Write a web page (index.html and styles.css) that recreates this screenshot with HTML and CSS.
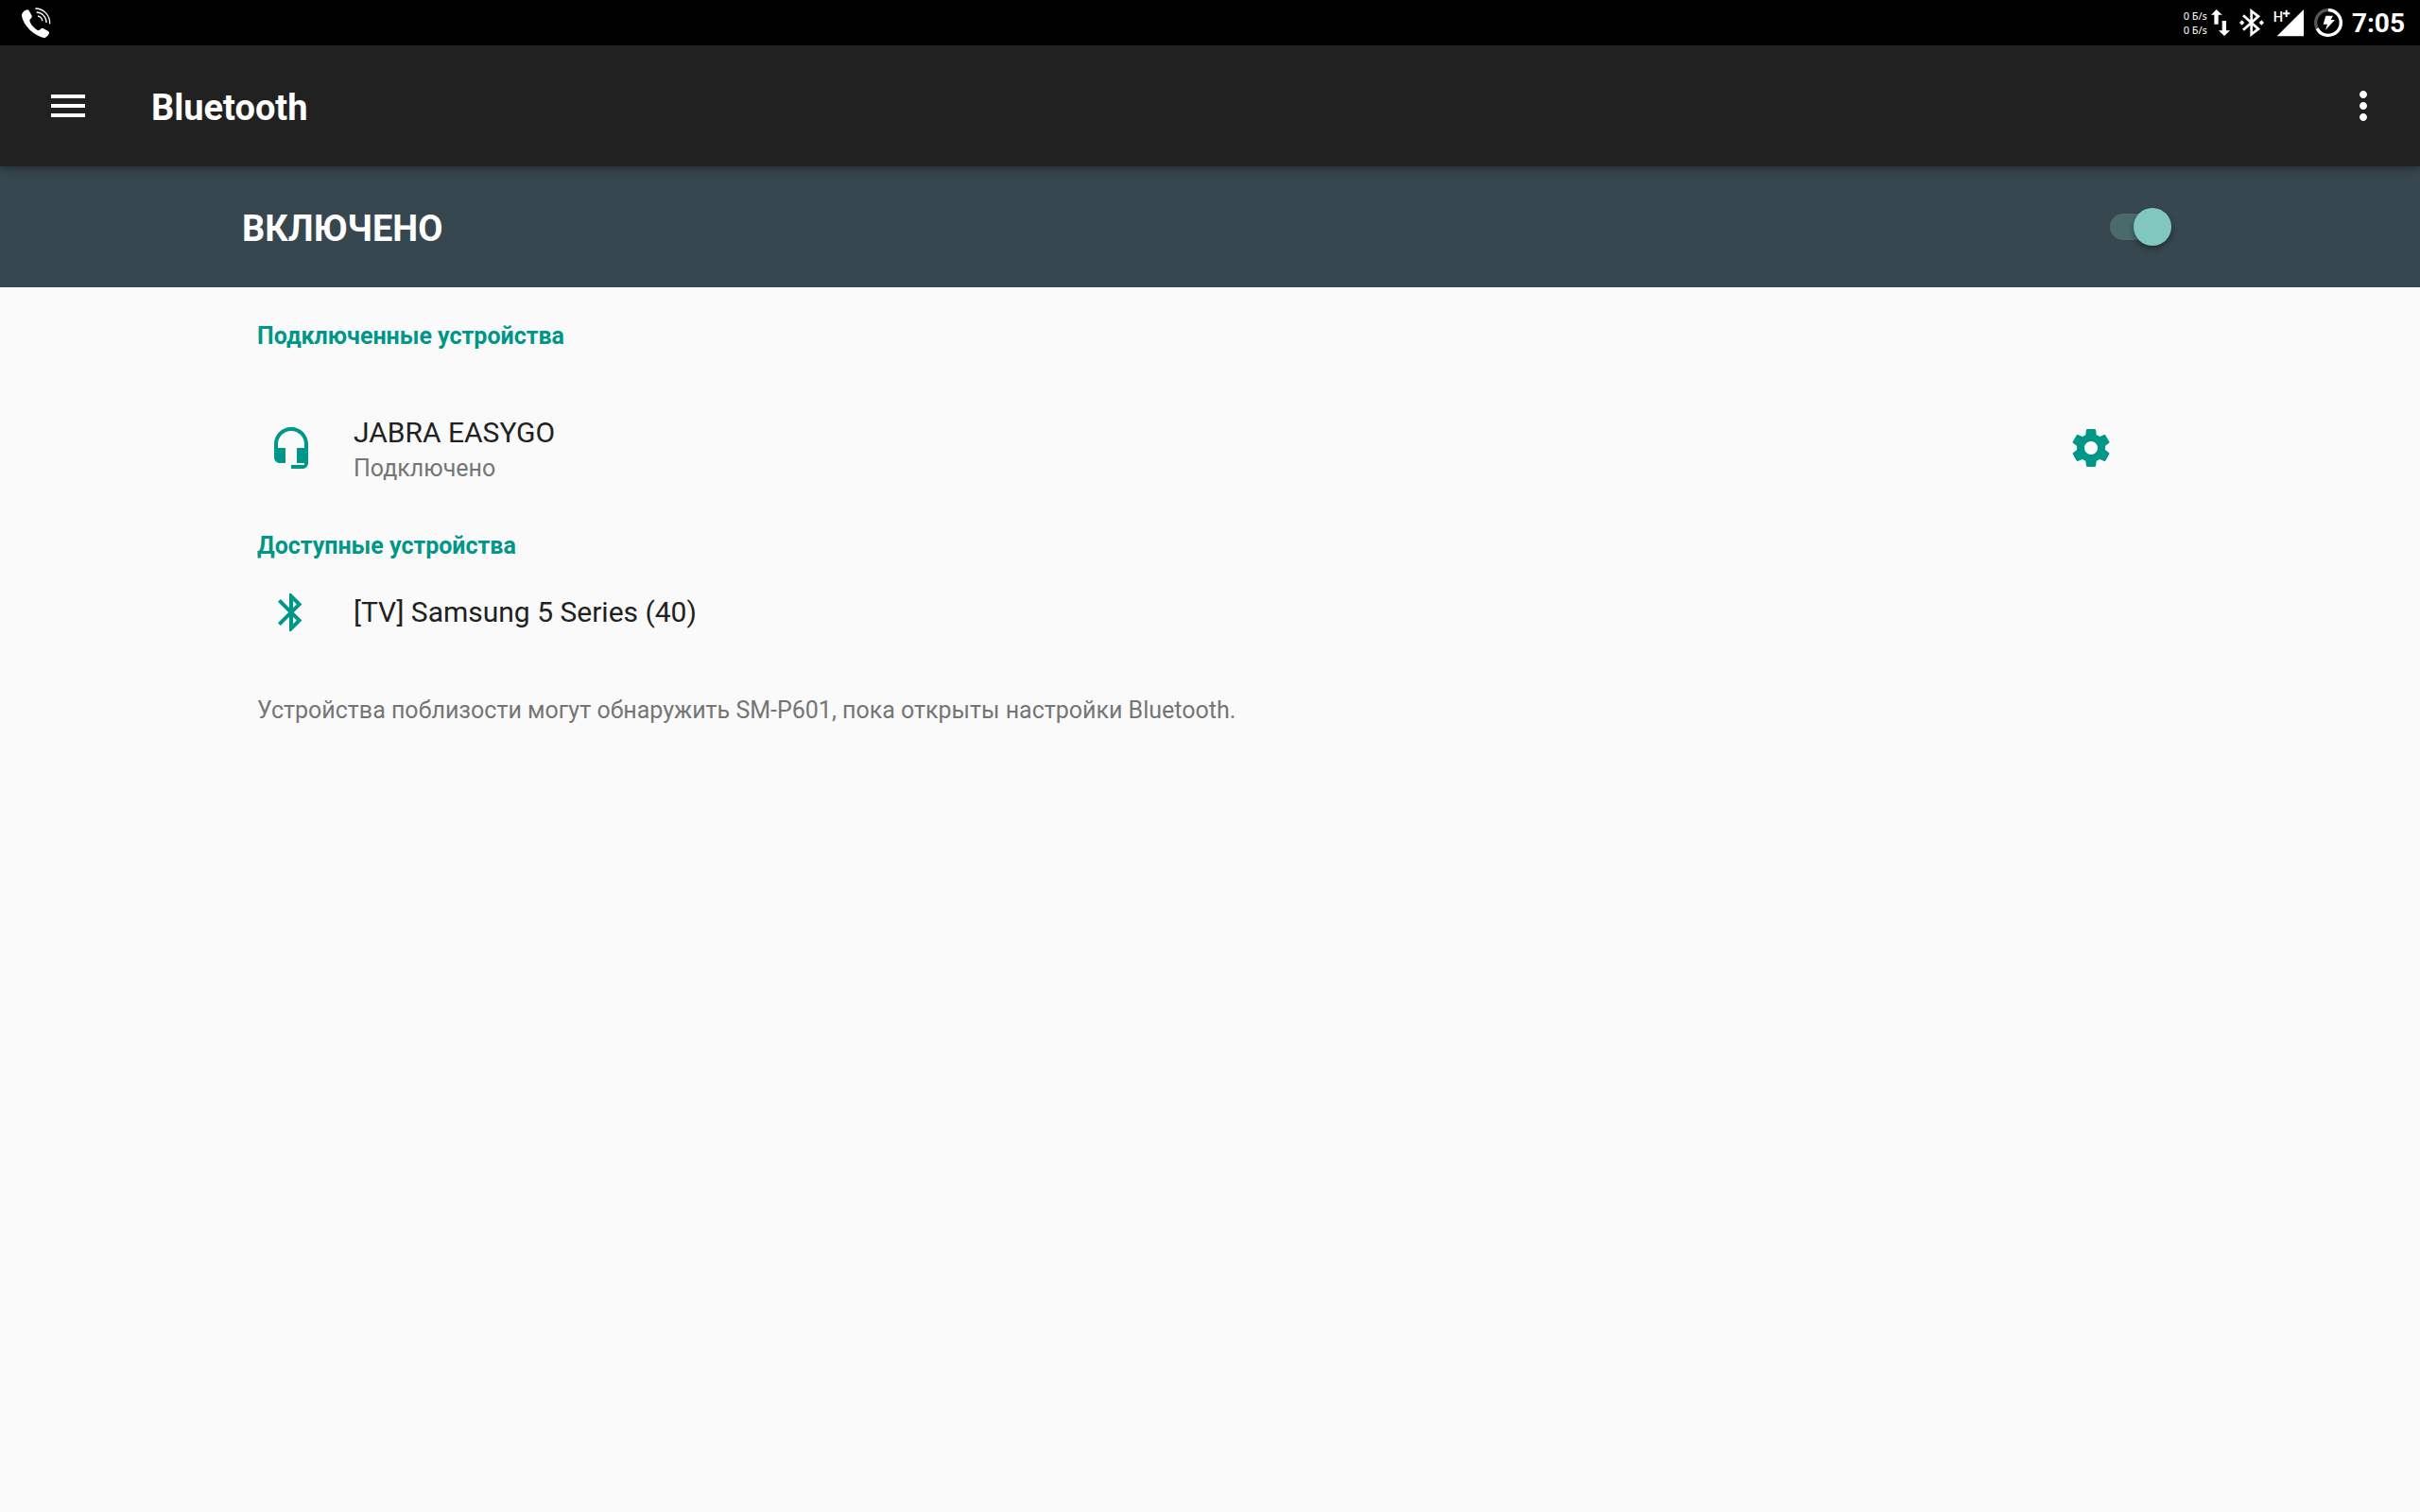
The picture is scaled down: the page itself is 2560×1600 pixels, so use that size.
FILE: index.html
```html
<!DOCTYPE html>
<html lang="ru">
<head>
  <meta charset="UTF-8">
  <meta name="viewport" content="width=device-width, initial-scale=1.0">
  <title>Bluetooth</title>
  <link rel="stylesheet" href="styles.css">
</head>
<body>

  <div class="status-bar">
    <svg class="call" viewBox="60 20 102 102" aria-hidden="true">
      <path fill="#fff" d="M70 42Q76 32 86 30Q90 29 93 34L101 49Q103 53 99 57L94 62Q93 68 100 78Q110 90 120 96L126 94Q130 88 135 88L152 97Q158 101 156 105Q152 115 144 118Q136 121 118 111Q92 96 78 73Q66 52 70 42Z"/>
      <path fill="none" stroke="#fff" stroke-width="4" d="M112 26A46 46 0 0 1 158 75M116 38A32 32 0 0 1 147 71M120 50A16 16 0 0 1 134 66"/>
    </svg>

    <div class="status-icons">
      <div class="traffic">
        <div class="speed"><span>0 Б/s</span><span>0 Б/s</span></div>
        <svg width="21" height="30" viewBox="145 27 63 90" aria-hidden="true">
          <path fill="#fff" d="M165 30L183 47H171V77H158V47H148ZM183 66H196V97H208L190 114L172 97H183Z"/>
        </svg>
      </div>
      <svg width="26" height="30" viewBox="237 27 78 90" aria-hidden="true">
        <path fill="none" stroke="#fff" stroke-width="8" d="M249 49L297 92L275 109V35L297 52L249 95"/>
        <path fill="#fff" d="M245 64L253 72L245 80L237 72ZM307 64L315 72L307 80L299 72Z"/>
      </svg>
      <svg class="signal" width="33" height="30" viewBox="345 27 99 90">
        <path fill="#fff" d="M356 115L441 30V115Z"/>
        <text x="344" y="68">H</text>
        <path fill="none" stroke="#fff" stroke-width="6" d="M375 43H397M386 32V54"/>
      </svg>
      <svg width="30" height="30" viewBox="477 27 90 90" aria-hidden="true">
        <circle cx="522" cy="72" r="40" fill="none" stroke="#555" stroke-width="10"/>
        <circle cx="522" cy="72" r="40" fill="none" stroke="#fff" stroke-width="10" pathLength="100" stroke-dasharray="67 33" transform="rotate(-90 522 72)"/>
        <path fill="#fff" d="M514 50H537L530 63H543L513 95L519 77H506Z"/>
      </svg>
      <time class="clock">7:05</time>
    </div>
  </div>

  <header class="toolbar">
    <button class="icon-btn" aria-label="Меню">
      <svg class="icon" viewBox="0 0 24 24"><path d="M3 18h18v-2H3v2zm0-5h18v-2H3v2zm0-7v2h18V6H3z"/></svg>
    </button>
    <h1>Bluetooth</h1>
    <button class="icon-btn" aria-label="Ещё">
      <svg class="icon" viewBox="0 0 24 24"><path d="M12 8c1.1 0 2-.9 2-2s-.9-2-2-2-2 .9-2 2 .9 2 2 2zm0 2c-1.1 0-2 .9-2 2s.9 2 2 2 2-.9 2-2-.9-2-2-2zm0 6c-1.1 0-2 .9-2 2s.9 2 2 2 2-.9 2-2-.9-2-2-2z"/></svg>
    </button>
  </header>

  <div class="switch-bar">
    <label for="bt-switch">ВКЛЮЧЕНО</label>
    <input type="checkbox" id="bt-switch" class="switch" checked>
  </div>

  <main>
    <h2>Подключенные устройства</h2>
    <div class="device connected">
      <svg class="icon" viewBox="0 0 24 24"><path d="M12 1c-4.97 0-9 4.03-9 9v7c0 1.66 1.34 3 3 3h3v-8H5v-2c0-3.87 3.13-7 7-7s7 3.13 7 7v2h-4v8h4v1h-7v2h6c1.66 0 3-1.34 3-3V10c0-4.97-4.03-9-9-9z"/></svg>
      <div class="info">
        <div class="name">JABRA EASYGO</div>
        <div class="state">Подключено</div>
      </div>
      <button class="icon-btn settings" aria-label="Настройки устройства">
        <svg class="icon" viewBox="0 0 24 24"><path d="M19.43 12.98c.04-.32.07-.64.07-.98s-.03-.66-.07-.98l2.11-1.65c.19-.15.24-.42.12-.64l-2-3.46c-.12-.22-.39-.3-.61-.22l-2.49 1c-.52-.4-1.08-.73-1.69-.98l-.38-2.65C14.46 2.18 14.25 2 14 2h-4c-.25 0-.46.18-.49.42l-.38 2.65c-.61.25-1.17.59-1.69.98l-2.49-1c-.23-.09-.49 0-.61.22l-2 3.46c-.13.22-.07.49.12.64l2.11 1.65c-.04.32-.07.65-.07.98s.03.66.07.98l-2.11 1.65c-.19.15-.24.42-.12.64l2 3.46c.12.22.39.3.61.22l2.49-1c.52.4 1.08.73 1.69.98l.38 2.65c.03.24.24.42.49.42h4c.25 0 .46-.18.49-.42l.38-2.65c.61-.25 1.17-.59 1.69-.98l2.49 1c.23.09.49 0 .61-.22l2-3.46c.12-.22.07-.49-.12-.64l-2.11-1.65zM12 15.5c-1.93 0-3.5-1.57-3.5-3.5s1.57-3.5 3.5-3.5 3.5 1.57 3.5 3.5-1.57 3.5-3.5 3.5z"/></svg>
      </button>
    </div>

    <h2>Доступные устройства</h2>
    <div class="device">
      <svg class="icon" viewBox="0 0 24 24"><path d="M17.71 7.71L12 2h-1v7.59L6.41 5 5 6.41 10.59 12 5 17.59 6.41 19 11 14.41V22h1l5.71-5.71-4.3-4.29 4.3-4.29zM13 5.83l1.88 1.88L13 9.59V5.83zm1.88 10.46L13 18.17v-3.76l1.88 1.88z"/></svg>
      <div class="info">
        <div class="name">[TV] Samsung 5 Series (40)</div>
      </div>
    </div>

    <p class="hint">Устройства поблизости могут обнаружить SM-P601, пока открыты настройки Bluetooth.</p>
  </main>

</body>
</html>
```
FILE: styles.css
```css
* {
  box-sizing: border-box;
}
body {
  margin: 0;
  min-height: 100vh;
  background-color: #fafafa;
  color: #212121;
  font-family: Roboto, "Noto Sans", sans-serif;
  font-size: 25px;
}
h1, h2, p {
  margin: 0;
}
.icon {
  display: block;
  width: 48px;
  height: 48px;
  fill: currentColor;
  flex-shrink: 0;
}
.icon-btn {
  padding: 0;
  border: none;
  background: none;
  color: inherit;
  cursor: pointer;
}

/* status bar */
.status-bar {
  display: flex;
  align-items: center;
  justify-content: space-between;
  height: 48px;
  padding: 0 16px 0 20px;
  background-color: #000;
  color: #fff;
}
.call {
  width: 34px;
  height: 34px;
}
.status-icons {
  display: flex;
  align-items: center;
  gap: 10px;
}
.traffic {
  display: flex;
  align-items: center;
  gap: 3px;
}
.speed {
  display: flex;
  flex-direction: column;
  font-family: "Noto Sans", sans-serif;
  font-size: 11px;
  line-height: 15px;
}
.signal text {
  fill: #fff;
  font-size: 44px;
  font-weight: 500;
}
.clock {
  font-size: 28px;
  font-weight: 700;
}

/* toolbar */
.toolbar {
  position: relative;
  display: flex;
  align-items: center;
  height: 128px;
  padding: 0 36px 0 48px;
  background-color: #212121;
  color: #fff;
  box-shadow: 0 2px 10px rgba(0, 0, 0, 0.4);
}
.toolbar h1 {
  flex: 1;
  padding: 4px 0 0 64px;
  font-size: 38px;
  font-weight: 700;
}

/* on/off bar */
.switch-bar {
  display: flex;
  align-items: center;
  justify-content: space-between;
  height: 128px;
  padding: 0 10%;
  background-color: #37474f;
  color: #fff;
  font-size: 38px;
  font-weight: 700;
}
.switch-bar label {
  padding-top: 4px;
}
.switch {
  appearance: none;
  display: flex;
  align-items: center;
  justify-content: flex-end;
  width: 60px;
  height: 28px;
  margin: 0 12px 0 0;
  border-radius: 14px;
  background-color: #4b6a6c;
  cursor: pointer;
}
.switch::before {
  content: "";
  flex-shrink: 0;
  width: 40px;
  height: 40px;
  margin: 0 -5px;
  border-radius: 50%;
  background-color: #80c7c0;
  box-shadow: 0 3px 6px rgba(0, 0, 0, 0.4);
}
.switch:not(:checked) {
  justify-content: flex-start;
}

/* device list */
main {
  padding: 32px 10%;
}
h2 {
  padding-left: 16px;
  color: #009688;
  font-size: 25px;
  font-weight: 700;
  line-height: 40px;
}
.device {
  display: flex;
  align-items: center;
  height: 80px;
  padding: 0 68px 0 28px;
  margin: 10px 0 44px;
}
.device.connected {
  margin-top: 58px;
}
.device .icon {
  color: #009688;
}
.info {
  flex: 1;
  padding-left: 42px;
}
.connected .info {
  padding-top: 6px;
}
.name {
  font-size: 30px;
  line-height: 38px;
}
.state {
  color: #757575;
  line-height: 38px;
}
.hint {
  padding-left: 16px;
  color: #757575;
  line-height: 40px;
}
```
